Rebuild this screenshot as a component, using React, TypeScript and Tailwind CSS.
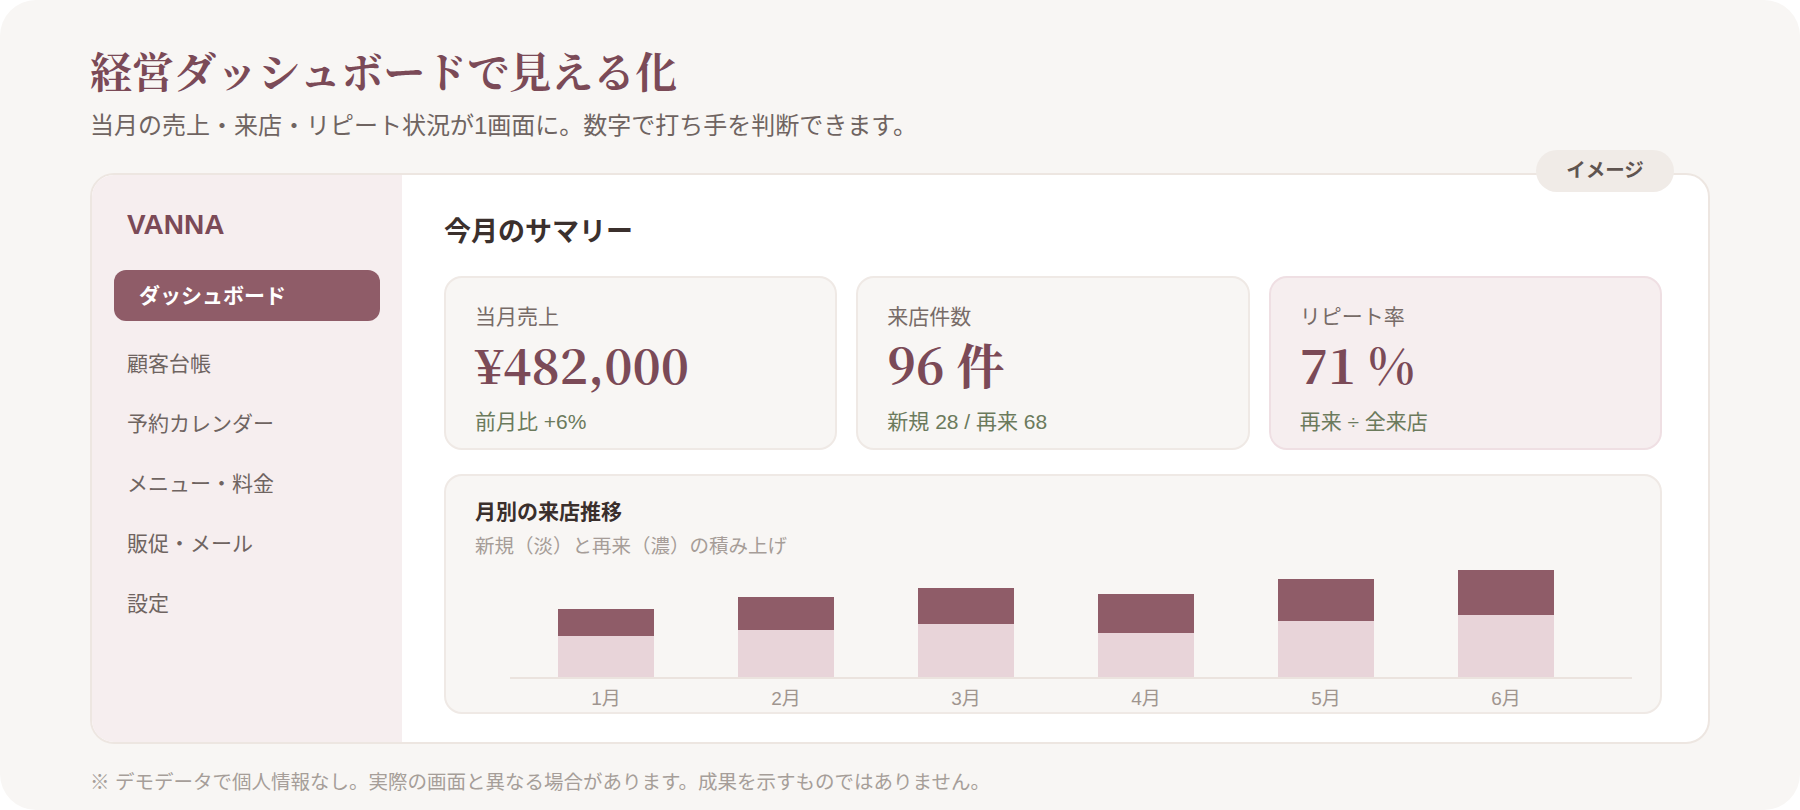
import React from 'react';

const sans = { fontFamily: '"Liberation Sans", "Noto Sans CJK JP", sans-serif' };

const navItems = ['顧客台帳', '予約カレンダー', 'メニュー・料金', '販促・メール', '設定'];

const kpis = [
  { label: '当月売上', value: '¥482,000', sub: '前月比 +6%', accent: false },
  { label: '来店件数', value: '96 件', sub: '新規 28 / 再来 68', accent: false },
  { label: 'リピート率', value: '71 %', sub: '再来 ÷ 全来店', accent: true },
];

// px heights: light = 新規, dark = 再来
const months = [
  { m: '1月', light: 41, dark: 27 },
  { m: '2月', light: 47, dark: 33 },
  { m: '3月', light: 53, dark: 36 },
  { m: '4月', light: 44, dark: 39 },
  { m: '5月', light: 56, dark: 42 },
  { m: '6月', light: 62, dark: 45 },
];

const KpiCard = ({ label, value, sub, accent }: { label: string; value: string; sub: string; accent: boolean }) => (
  <div
    className={
      accent
        ? 'flex-1 h-[174px] rounded-[18px] border-2 border-[#efdfe3] bg-[#f6eeef] pl-[29px] pt-[24px]'
        : 'flex-1 h-[174px] rounded-[18px] border-2 border-[#efe9e5] bg-[#f8f6f4] pl-[29px] pt-[24px]'
    }
  >
    <div className="text-[21px] leading-[30px] text-[#776b67]">{label}</div>
    <div className="mt-[8px] text-[48px] leading-none font-bold text-[#7b4a57] font-['Noto_Serif_CJK_JP','Liberation_Serif',serif]">
      {value}
    </div>
    <div className="mt-[19px] text-[21px] leading-[30px] text-[#6b7a5c]">{sub}</div>
  </div>
);

export default function App() {
  return (
    <div className="min-h-screen bg-white" style={sans}>
      <div className="h-[810px] rounded-[36px] bg-[#f8f6f4] px-[90px] pt-[41px]">
        <h1 className="text-[42px] leading-[58px] font-bold text-[#7b4a57] font-['Noto_Serif_CJK_JP','Liberation_Serif',serif]">
          経営ダッシュボードで見える化
        </h1>
        <p className="mt-[9px] text-[24px] leading-[36px] text-[#6f6461]">
          当月の売上・来店・リピート状況が1画面に。数字で打ち手を判断できます。
        </p>

        <div className="relative mt-[29px] flex h-[571px] w-[1620px] rounded-[24px] border-2 border-[#ede6e1] bg-white">
          <div className="absolute -top-[25px] right-[34px] flex h-[42px] w-[138px] items-center justify-center rounded-full bg-[#f0ebe7] text-[19.5px] font-bold text-[#5f5450]">
            イメージ
          </div>

          {/* Sidebar */}
          <aside className="w-[310px] shrink-0 rounded-l-[22px] bg-[#f6eeef] px-[22px] pt-[33px]">
            <div className="pl-[13px] text-[28px] leading-[34px] font-bold text-[#7b4a57]">VANNA</div>
            <div className="mt-[28px] flex h-[51px] items-center rounded-[12px] bg-[#8f5c68] pl-[25px] text-[21px] font-bold text-white">
              ダッシュボード
            </div>
            <nav className="mt-[13px]">
              {navItems.map((item) => (
                <div key={item} className="flex h-[60px] items-center pl-[13px] text-[21px] text-[#6f6461]">
                  {item}
                </div>
              ))}
            </nav>
          </aside>

          {/* Main */}
          <main className="flex-1 pl-[42px] pr-[46px] pt-[40px]">
            <h2 className="text-[27px] leading-[35px] font-bold text-[#3b302d]">今月のサマリー</h2>
            <div className="mt-[26px] flex gap-[19px]">
              {kpis.map((k) => (
                <KpiCard key={k.label} {...k} />
              ))}
            </div>

            <div className="mt-[24px] h-[240px] rounded-[18px] border-2 border-[#efe9e5] bg-[#f8f6f4] pl-[29px] pr-[28px] pt-[21px]">
              <div className="text-[21px] leading-[30px] font-bold text-[#3a2f2c]">月別の来店推移</div>
              <div className="mt-[5px] text-[19.5px] leading-[28px] text-[#a69d98]">新規（淡）と再来（濃）の積み上げ</div>
              <div className="ml-[35px]">
                <div className="flex h-[119px] items-end gap-[84px] border-b-2 border-[#ebe3de] pl-[48px]">
                  {months.map((d) => (
                    <div key={d.m} className="flex w-[96px] flex-col">
                      <div className="bg-[#8f5c68]" style={{ height: d.dark }} />
                      <div className="bg-[#e8d4d9]" style={{ height: d.light }} />
                    </div>
                  ))}
                </div>
                <div className="mt-[8px] flex gap-[84px] pl-[48px]">
                  {months.map((d) => (
                    <div key={d.m} className="w-[96px] text-center text-[19px] leading-[24px] text-[#a0958f]">
                      {d.m}
                    </div>
                  ))}
                </div>
              </div>
            </div>
          </main>
        </div>

        <p className="mt-[24px] text-[19.5px] leading-[28px] text-[#a69e99]">
          ※ デモデータで個人情報なし。実際の画面と異なる場合があります。成果を示すものではありません。
        </p>
      </div>
    </div>
  );
}
